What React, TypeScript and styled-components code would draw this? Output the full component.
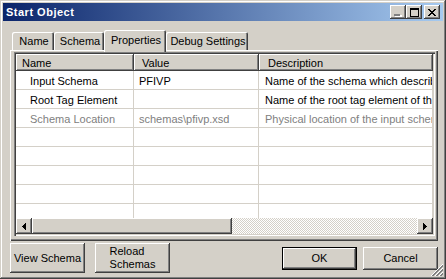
import React from "react";
import styled, { createGlobalStyle, css } from "styled-components";

const Global = createGlobalStyle`
  html, body { margin: 0; padding: 0; background: #d4d0c8; }
  body { font-family: "Liberation Sans", Arial, sans-serif; font-size: 11px; color: #000; }
  * { box-sizing: border-box; }
`;

const raised = css`
  box-shadow: inset -1px -1px #404040, inset 1px 1px #ffffff, inset -2px -2px #808080, inset 2px 2px #d4d0c8;
`;

const Window = styled.div`
  position: relative;
  width: 446px;
  height: 279px;
  padding: 3px;
  background: #d4d0c8;
  display: flex;
  flex-direction: column;
  box-shadow: inset -1px -1px #404040, inset 1px 1px #d4d0c8, inset -2px -2px #808080, inset 2px 2px #ffffff;
`;

const TitleBar = styled.div`
  height: 18px;
  flex: none;
  display: flex;
  align-items: center;
  padding: 0 3px 0 3px;
  background: linear-gradient(to right, #0a246a, #a6caf0);
`;

const Title = styled.span`
  flex: 1;
  color: #fff;
  font-weight: bold;
  font-size: 11px;
  letter-spacing: 0.5px;
`;

const CaptionButton = styled.div<{ $gap?: number }>`
  width: 16px;
  height: 14px;
  margin-left: ${(p) => p.$gap ?? 0}px;
  background: #d4d0c8;
  display: flex;
  align-items: center;
  justify-content: center;
  ${raised}
  svg { display: block; }
`;

const Client = styled.div`
  flex: 1;
  display: flex;
  flex-direction: column;
  padding: 9px 5px 0 7px;
`;

const TabStrip = styled.div`
  height: 20px;
  flex: none;
  display: flex;
  align-items: flex-end;
  padding-left: 2px;
  position: relative;
  z-index: 1;
`;

const Tab = styled.div<{ $w: number; $active?: boolean }>`
  width: ${(p) => p.$w}px;
  height: ${(p) => (p.$active ? 22 : 18)}px;
  margin-bottom: ${(p) => (p.$active ? -2 : 0)}px;
  padding-left: 2px;
  padding-bottom: ${(p) => (p.$active ? 3 : 0)}px;
  background: #d4d0c8;
  display: flex;
  align-items: center;
  justify-content: center;
  white-space: nowrap;
  border-radius: 2px 2px 0 0;
  box-shadow: inset 1px 1px #ffffff, inset -1px 0 #404040, inset -2px 0 #808080;
`;

const Panel = styled.div`
  height: 191px;
  flex: none;
  display: flex;
  flex-direction: column;
  padding: 2px 3px 5px 4px;
  box-shadow: inset 1px 1px #ffffff, inset -1px -1px #404040, inset -2px -2px #808080;
`;

const ListView = styled.div`
  flex: 1;
  display: flex;
  flex-direction: column;
  padding: 2px;
  background: #fff;
  overflow: hidden;
  box-shadow: inset 1px 1px #808080, inset 2px 2px #404040, inset -1px -1px #ffffff, inset -2px -2px #d4d0c8;
`;

const HeaderRow = styled.div`
  height: 17px;
  flex: none;
  display: flex;
`;

const HeaderCell = styled.div<{ $w: number; $pad: number }>`
  width: ${(p) => p.$w}px;
  flex: none;
  padding-left: ${(p) => p.$pad}px;
  display: flex;
  align-items: center;
  background: #d4d0c8;
  white-space: nowrap;
  overflow: hidden;
  ${raised}
`;

const Body = styled.div`
  flex: 1;
  overflow: hidden;
`;

const Row = styled.div<{ $disabled?: boolean }>`
  height: 19px;
  display: flex;
  color: ${(p) => (p.$disabled ? "#808080" : "#000")};
  border-bottom: 1px solid #d4d0c8;
`;

const Cell = styled.div<{ $w: number; $pad: number }>`
  width: ${(p) => p.$w}px;
  flex: none;
  padding-left: ${(p) => p.$pad}px;
  padding-top: 1px;
  display: flex;
  align-items: center;
  white-space: nowrap;
  overflow: hidden;
  border-right: 1px solid #d4d0c8;
`;

const HScroll = styled.div`
  height: 16px;
  flex: none;
  display: flex;
  background: repeating-conic-gradient(#ffffff 0 25%, #d4d0c8 0 50%) 0 0 / 2px 2px;
`;

const ScrollButton = styled.div`
  width: 16px;
  height: 16px;
  flex: none;
  background: #d4d0c8;
  display: flex;
  align-items: center;
  justify-content: center;
  ${raised}
  svg { display: block; }
`;

const Thumb = styled.div<{ $w: number }>`
  width: ${(p) => p.$w}px;
  flex: none;
  background: #d4d0c8;
  ${raised}
`;

const Track = styled.div`
  flex: 1;
`;

const ButtonRow = styled.div`
  flex: 1;
  display: flex;
  align-items: center;
  padding-bottom: 1px;
`;

const Button = styled.div<{ $tall?: boolean; $default?: boolean; $gap?: number }>`
  width: 75px;
  height: ${(p) => (p.$tall ? 30 : 23)}px;
  margin-left: ${(p) => p.$gap ?? 0}px;
  flex: none;
  background: #d4d0c8;
  display: flex;
  align-items: center;
  justify-content: center;
  line-height: 13px;
  ${(p) =>
    p.$default
      ? css`
          box-shadow: inset 0 0 0 1px #000000, inset -2px -2px #404040, inset 2px 2px #ffffff,
            inset -3px -3px #808080, inset 3px 3px #d4d0c8;
        `
      : raised}
`;

const ButtonLabel = styled.span`
  display: inline-block;
  text-align: left;
`;

const Spacer = styled.div`
  flex: 1;
`;

const Grip = styled.svg`
  position: absolute;
  right: 3px;
  bottom: 3px;
  display: block;
`;

const MinGlyph = () => (
  <svg width="8" height="3" viewBox="0 0 8 3" shapeRendering="crispEdges" style={{ marginTop: 6 }}>
    <rect x="1" y="1" width="7" height="2" fill="#ffffff" />
    <rect x="0" y="0" width="6" height="2" fill="#808080" />
  </svg>
);

const MaxGlyph = () => (
  <svg width="9" height="9" viewBox="0 0 9 9" shapeRendering="crispEdges">
    <path d="M0 0h9v9h-9z M1 2v6h7v-6z" fill="#000" fillRule="evenodd" />
  </svg>
);

const CloseGlyph = () => (
  <svg width="8" height="7" viewBox="0 0 8 7" shapeRendering="crispEdges">
    <path
      d="M0 0h2v1h-2z M6 0h2v1h-2z M1 1h2v1h-2z M5 1h2v1h-2z M2 2h4v1h-4z M3 3h2v1h-2z M2 4h4v1h-4z M1 5h2v1h-2z M5 5h2v1h-2z M0 6h2v1h-2z M6 6h2v1h-2z"
      fill="#000"
    />
  </svg>
);

const LeftArrow = () => (
  <svg width="4" height="7" viewBox="0 0 4 7" shapeRendering="crispEdges">
    <path d="M3 0h1v7h-1z M2 1h1v5h-1z M1 2h1v3h-1z M0 3h1v1h-1z" fill="#000" />
  </svg>
);

const RightArrow = () => (
  <svg width="4" height="7" viewBox="0 0 4 7" shapeRendering="crispEdges">
    <path d="M0 0h1v7h-1z M1 1h1v5h-1z M2 2h1v3h-1z M3 3h1v1h-1z" fill="#000" />
  </svg>
);

const gripPixels = (sums: number[]) => {
  const out: string[] = [];
  sums.forEach((c) => {
    for (let x = 0; x < 12; x++) {
      const y = c - x;
      if (y >= 0 && y < 12) out.push(`M${x} ${y}h1v1h-1z`);
    }
  });
  return out.join(" ");
};

const COLS = [118, 125, 174];

type Item = { name: string; value: string; desc: string; disabled?: boolean };

const ROWS: Item[] = [
  { name: "Input Schema", value: "PFIVP", desc: "Name of the schema which describes the input" },
  { name: "Root Tag Element", value: "", desc: "Name of the root tag element of the input" },
  { name: "Schema Location", value: "schemas\\pfivp.xsd", desc: "Physical location of the input schema", disabled: true },
  { name: "", value: "", desc: "" },
  { name: "", value: "", desc: "" },
  { name: "", value: "", desc: "" },
  { name: "", value: "", desc: "" },
  { name: "", value: "", desc: "" },
];

export default function App() {
  return (
    <>
      <Global />
      <Window>
        <TitleBar>
          <Title>Start Object</Title>
          <CaptionButton>
            <MinGlyph />
          </CaptionButton>
          <CaptionButton>
            <MaxGlyph />
          </CaptionButton>
          <CaptionButton $gap={2}>
            <CloseGlyph />
          </CaptionButton>
        </TitleBar>
        <Client>
          <TabStrip>
            <Tab $w={42}>Name</Tab>
            <Tab $w={50}>Schema</Tab>
            <Tab $w={62} $active>
              Properties
            </Tab>
            <Tab $w={82}>Debug Settings</Tab>
          </TabStrip>
          <Panel>
            <ListView>
              <HeaderRow>
                <HeaderCell $w={COLS[0]} $pad={6}>Name</HeaderCell>
                <HeaderCell $w={COLS[1]} $pad={8}>Value</HeaderCell>
                <HeaderCell $w={COLS[2]} $pad={9}>Description</HeaderCell>
              </HeaderRow>
              <Body>
                {ROWS.map((r, i) => (
                  <Row key={i} $disabled={r.disabled}>
                    <Cell $w={COLS[0]} $pad={14}>{r.name}</Cell>
                    <Cell $w={COLS[1]} $pad={5}>{r.value}</Cell>
                    <Cell $w={COLS[2]} $pad={6}>{r.desc}</Cell>
                  </Row>
                ))}
              </Body>
              <HScroll>
                <ScrollButton>
                  <LeftArrow />
                </ScrollButton>
                <Thumb $w={200} />
                <Track />
                <ScrollButton>
                  <RightArrow />
                </ScrollButton>
              </HScroll>
            </ListView>
          </Panel>
          <ButtonRow>
            <Button $tall>View Schema</Button>
            <Button $tall $gap={10}>
              <ButtonLabel>
                Reload
                <br />
                Schemas
              </ButtonLabel>
            </Button>
            <Spacer />
            <Button $default>OK</Button>
            <Button $gap={6}>Cancel</Button>
          </ButtonRow>
        </Client>
        <Grip width="12" height="12" viewBox="0 0 12 12" shapeRendering="crispEdges">
          <path d={gripPixels([11, 15, 19])} fill="#ffffff" />
          <path d={gripPixels([12, 13, 16, 17, 20, 21])} fill="#808080" />
        </Grip>
      </Window>
    </>
  );
}
